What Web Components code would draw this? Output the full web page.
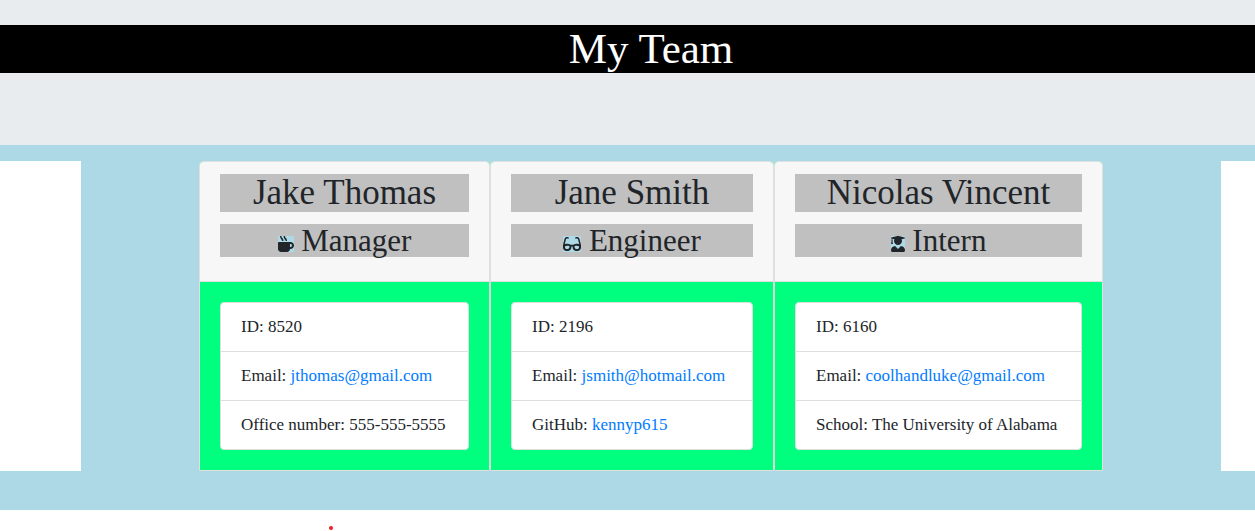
<!DOCTYPE html>
<html lang="en">
<head>
<meta charset="utf-8">
<meta name="viewport" content="width=device-width, initial-scale=1">
<title>My Team</title>
<style>
  body { margin: 0; background: #fff; color: #212529; font: 17px/24px "Liberation Serif", serif; overflow-x: hidden; }
</style>
</head>
<body>
<team-banner>My Team</team-banner>
<team-board>
  <team-card name="Jake Thomas" role-name="Manager" icon="mug">
    <team-fact>ID: 8520</team-fact>
    <team-fact label="Email: " href="mailto:jthomas@gmail.com">jthomas@gmail.com</team-fact>
    <team-fact>Office number: 555-555-5555</team-fact>
  </team-card>
  <team-card name="Jane Smith" role-name="Engineer" icon="glasses">
    <team-fact>ID: 2196</team-fact>
    <team-fact label="Email: " href="mailto:jsmith@hotmail.com">jsmith@hotmail.com</team-fact>
    <team-fact label="GitHub: " href="https://github.com/kennyp615">kennyp615</team-fact>
  </team-card>
  <team-card name="Nicolas Vincent" role-name="Intern" icon="graduate">
    <team-fact>ID: 6160</team-fact>
    <team-fact label="Email: " href="mailto:coolhandluke@gmail.com">coolhandluke@gmail.com</team-fact>
    <team-fact>School: The University of Alabama</team-fact>
  </team-card>
</team-board>
<team-footer></team-footer>

<script>
const icons = {
  mug: [512, 'M127.1 146.5c1.3 7.7 8 13.5 16 13.5h16.5c9.8 0 17.6-8.5 16.3-18-3.8-28.2-16.4-54.2-36.6-74.7-14.4-14.7-23.6-33.3-26.4-53.5C111.8 5.9 105 0 96.8 0H80.4C70.6 0 63 8.5 64.1 18c3.9 31.9 18 61.3 40.6 84.4 12 12.2 19.7 27.5 22.4 44.1zm112 0c1.3 7.7 8 13.5 16 13.5h16.5c9.8 0 17.6-8.5 16.3-18-3.8-28.2-16.4-54.2-36.6-74.7-14.4-14.7-23.6-33.3-26.4-53.5C223.8 5.9 217 0 208.8 0h-16.4c-9.8 0-17.5 8.5-16.3 18 3.9 31.9 18 61.3 40.6 84.4 12 12.2 19.7 27.5 22.4 44.1zM400 192H32c-17.7 0-32 14.3-32 32v192c0 53 43 96 96 96h192c53 0 96-43 96-96h16c61.8 0 112-50.2 112-112s-50.2-112-112-112zm0 160h-16v-96h16c26.5 0 48 21.5 48 48s-21.5 48-48 48z'],
  glasses: [576, 'M574.1 280.37L528.75 98.66c-5.91-23.7-21.59-44.05-43-55.81-21.44-11.73-46.97-14.11-70.19-6.33l-15.25 5.08c-8.39 2.79-12.92 11.86-10.12 20.24l5.06 15.18c2.79 8.38 11.85 12.91 20.23 10.12l13.18-4.39c10.87-3.62 23-3.57 33.16 1.73 10.29 5.37 17.57 14.56 20.37 25.82l38.46 153.82c-22.19-6.81-49.79-12.46-81.2-12.46-34.77 0-73.98 7.02-114.85 26.74h-73.18c-40.87-19.74-80.08-26.75-114.86-26.75-31.42 0-59.02 5.65-81.21 12.46l38.46-153.83c2.79-11.25 10.09-20.45 20.38-25.81 10.16-5.3 22.28-5.35 33.15-1.73l13.17 4.39c8.38 2.79 17.44-1.74 20.23-10.12l5.06-15.18c2.8-8.38-1.73-17.45-10.12-20.24l-15.25-5.08c-23.22-7.78-48.75-5.41-70.19 6.33-21.41 11.77-37.09 32.11-43 55.8L1.9 280.37A64.218 64.218 0 0 0 0 295.86v70.25C0 429.01 51.58 480 115.2 480h37.12c60.28 0 110.37-45.94 114.88-105.37l2.93-38.63h35.75l2.93 38.63C313.31 434.06 363.4 480 423.68 480h37.12c63.62 0 115.2-50.99 115.2-113.88v-70.25c0-5.23-.64-10.43-1.9-15.5zm-370.72 89.42c-1.97 25.91-24.4 46.21-51.06 46.21H115.2C86.97 416 64 393.62 64 366.11v-37.54c18.12-6.49 43.42-12.92 72.58-12.92 23.86 0 47.26 4.33 69.93 12.92l-3.13 41.22zM512 366.12c0 27.51-22.97 49.88-51.2 49.88h-37.12c-26.67 0-49.1-20.3-51.06-46.21l-3.13-41.22c22.67-8.59 46.08-12.92 69.95-12.92 29.12 0 54.43 6.44 72.55 12.93v37.54z'],
  graduate: [448, 'M319.4 320.6L224 416l-95.4-95.4C57.1 323.7 0 382.2 0 454.4v9.6c0 26.5 21.5 48 48 48h352c26.5 0 48-21.5 48-48v-9.6c0-72.2-57.1-130.7-128.6-133.8zM13.6 79.8l6.4 1.5v58.4c-7 4.2-12 11.5-12 20.3 0 8.4 4.6 15.4 11.1 19.7L3.5 242c-1.7 6.9 2.1 14 7.6 14h41.8c5.5 0 9.3-7.1 7.6-14l-15.6-62.3C51.4 175.4 56 168.4 56 160c0-8.8-5-16.1-12-20.3V87.1l66 15.9c-8.6 17.2-14 36.4-14 57 0 70.7 57.3 128 128 128s128-57.3 128-128c0-20.6-5.3-39.8-14-57l96.3-23.2c18.2-4.4 18.2-27.1 0-31.5l-190.4-46c-13-3.1-26.7-3.1-39.7 0L13.6 48.2c-18.1 4.4-18.1 27.2 0 31.6z']
};

class TeamBanner extends HTMLElement {
  connectedCallback() {
    this.attachShadow({ mode: 'open' }).innerHTML = `
      <style>
        :host { display: block; padding: 25px 0 72px; background: #e9ecef; }
        h1 { margin: 0; padding-left: 47px; background: #000; color: #fff; text-align: center; font-size: 43px; line-height: 48px; font-weight: 400; }
      </style>
      <h1><slot></slot></h1>`;
  }
}

class TeamBoard extends HTMLElement {
  connectedCallback() {
    this.attachShadow({ mode: 'open' }).innerHTML = `
      <style>
        :host { display: grid; grid-template-columns: 81px 1fr 34px; padding: 16px 0 39px; background: #add8e6; }
        .side { background: #fff; }
        main { display: grid; grid-template-columns: 291px 284px 329px; justify-content: center; }
      </style>
      <div class="side"></div><main><slot></slot></main><div class="side"></div>`;
  }
}

class TeamCard extends HTMLElement {
  connectedCallback() {
    const [width, path] = icons[this.getAttribute('icon')];
    this.attachShadow({ mode: 'open' }).innerHTML = `
      <style>
        :host { display: flex; flex-direction: column; box-sizing: border-box; border: 1px solid #dfdfdf; border-radius: 4px 4px 0 0; background: #00ff7f; overflow: hidden; }
        header { padding: 12px 20px 24px; background: #f7f7f7; border-bottom: 1px solid #dfdfdf; text-align: center; }
        h2, h3 { margin: 0; background: #c0c0c0; font-weight: 400; white-space: nowrap; }
        h2 { font-size: 35px; line-height: 38px; }
        h3 { margin-top: 12px; font-size: 31px; line-height: 33px; }
        svg { height: 16px; background: #add8e6; fill: currentColor; vertical-align: -1px; }
        .body { padding: 20px; }
        .list { border: 1px solid #dfdfdf; border-radius: 4px; background: #fff; overflow: hidden; }
      </style>
      <header>
        <h2>${this.getAttribute('name')}</h2>
        <h3><svg viewBox="0 0 ${width} 512" width="${width / 32}" aria-hidden="true"><path d="${path}"/></svg> ${this.getAttribute('role-name')}</h3>
      </header>
      <div class="body"><div class="list" role="list"><slot></slot></div></div>`;
  }
}

class TeamFact extends HTMLElement {
  connectedCallback() {
    const href = this.getAttribute('href');
    this.setAttribute('role', 'listitem');
    this.attachShadow({ mode: 'open' }).innerHTML = `
      <style>
        :host { display: block; padding: 12px 20px; white-space: nowrap; }
        :host(:not(:last-child)) { border-bottom: 1px solid #dfdfdf; }
        a { color: #007bff; text-decoration: none; }
      </style>
      ${href ? `${this.getAttribute('label')}<a href="${href}"><slot></slot></a>` : '<slot></slot>'}`;
  }
}

class TeamFooter extends HTMLElement {
  connectedCallback() {
    this.attachShadow({ mode: 'open' }).innerHTML = `
      <style>
        :host { display: block; padding: 16px 0 0 329px; }
        i { display: block; width: 4px; height: 4px; border-radius: 50%; background: #ed1c24; }
      </style>
      <i></i>`;
  }
}

customElements.define('team-banner', TeamBanner);
customElements.define('team-board', TeamBoard);
customElements.define('team-card', TeamCard);
customElements.define('team-fact', TeamFact);
customElements.define('team-footer', TeamFooter);
</script>
</body>
</html>
